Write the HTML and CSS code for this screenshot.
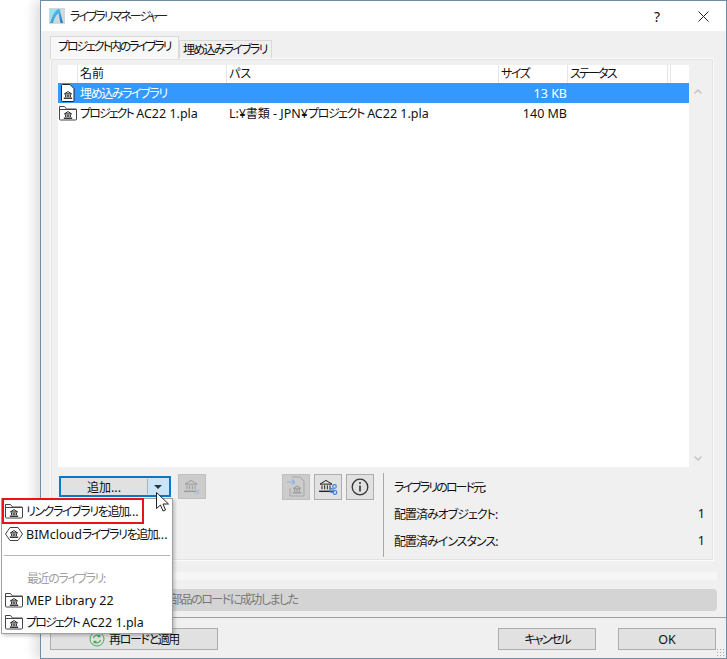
FILE: index.html
```html
<!DOCTYPE html>
<html lang="ja">
<head>
    <meta charset="UTF-8">
    <title>ライブラリマネージャー</title>
    <link rel="stylesheet" href="styles.css">
</head>
<body>
    <svg class="defs" width="0" height="0">
        <symbol id="bank" viewBox="0 0 12 10">
            <path d="M1.5 3.600 6 .8l4.500 2.800z" fill="none" stroke="currentColor" vector-effect="non-scaling-stroke"/>
            <path d="M3 4.500v3M5 4.500v3M7 4.500v3M9 4.500v3" stroke="currentColor" vector-effect="non-scaling-stroke"/>
            <path d="M.8 9h10.400" stroke="currentColor" stroke-width="1.400" vector-effect="non-scaling-stroke"/>
        </symbol>
        <symbol id="folder" viewBox="0 0 18 16">
            <path d="M.5 14V1.500h5l2 2.500h9.500a.5.5 0 0 1 .5.5V14a1 1 0 0 1-1 1H1.500a1 1 0 0 1-1-1z" fill="#fff" stroke="#444"/>
            <path d="M.5 4.500h17" stroke="#444"/>
            <use href="#bank" x="4" y="6" width="10" height="8" color="#222"/>
        </symbol>
    </svg>

    <div class="window">
        <div class="titlebar">
            <svg class="app-icon" viewBox="0 0 16 16">
                <defs>
                    <linearGradient id="logo" x1="0" y1="0" x2="1" y2="1">
                        <stop offset="0" stop-color="#5fe0f0"/>
                        <stop offset="1" stop-color="#1573c9"/>
                    </linearGradient>
                </defs>
                <rect x="0" y="0" width="16" height="16" fill="#cfd8dc"/>
                <path d="M1 15C3 9 5 3 9 1h1.500L14 15h-2.500L9.500 5C7 7 5 11 4 15z" fill="url(#logo)"/>
                <path d="M1 1h7C5 4 2 9 1 13z" fill="#8fe6f2"/>
            </svg>
            <span class="title">ライブラリマネージャー</span>
            <span class="help lat">?</span>
            <svg class="close" viewBox="0 0 11 11"><path d="M.5.500l10 10M10.500.500l-10 10" stroke="#222" fill="none"/></svg>
        </div>

        <div class="content">
            <div class="tabs">
                <div class="tab active">プロジェクト内のライブラリ</div>
                <div class="tab">埋め込みライブラリ</div>
            </div>

            <div class="panel">
                <div class="list-area">
                    <div class="list">
                        <div class="row head">
                            <div class="c-icon"></div>
                            <div class="c-name plain">名前</div>
                            <div class="c-path plain">パス</div>
                            <div class="c-size">サイズ</div>
                            <div class="c-status">ステータス</div>
                            <div class="c-end"></div>
                        </div>
                        <div class="row selected">
                            <div class="c-icon">
                                <svg class="row-icon" viewBox="0 0 18 18">
                                    <path d="M3.500.500h7.500l4 4v12a1 1 0 0 1-1 1h-10.500a1 1 0 0 1-1-1v-15a1 1 0 0 1 1-1z" fill="#fff" stroke="#222"/>
                                    <use href="#bank" x="4" y="7" width="10" height="8" color="#222"/>
                                </svg>
                            </div>
                            <div class="c-name">埋め込みライブラリ</div>
                            <div class="c-path"></div>
                            <div class="c-size lat">13 KB</div>
                            <div class="c-status"></div>
                        </div>
                        <div class="row">
                            <div class="c-icon"><svg class="row-icon"><use href="#folder"/></svg></div>
                            <div class="c-name"><span class="tight">プロジェクト</span><span class="lat"> AC22 1.pla</span></div>
                            <div class="c-path"><span class="lat">L:</span><span class="plain">¥書類</span><span class="lat"> - JPN¥</span>プロジェクト<span class="lat"> AC22 1.pla</span></div>
                            <div class="c-size lat">140 MB</div>
                            <div class="c-status"></div>
                        </div>
                    </div>
                    <div class="scrollbar">
                        <svg class="chevron" viewBox="0 0 8 5"><path d="M.5 4.500 4 1l3.500 3.500" fill="none" stroke="#c4c4c4" stroke-width="1.500"/></svg>
                        <svg class="chevron" viewBox="0 0 8 5"><path d="M.5.500 4 4 7.500.500" fill="none" stroke="#c4c4c4" stroke-width="1.500"/></svg>
                    </div>
                </div>

                <div class="lower">
                    <div class="tools">
                        <div class="split-button">
                            <div class="split-main plain">追加<span class="lat">...</span></div>
                            <div class="split-arrow"></div>
                        </div>
                        <button class="tool disabled remove-tool">
                            <svg viewBox="0 0 20 20" width="20" height="20">
                                <use href="#bank" x="1" y="2" width="16" height="14" color="#999"/>
                                <path d="M13 13l4 4M17 13l-4 4" stroke="#a9bfe0" stroke-width="1.200"/>
                            </svg>
                        </button>
                        <div class="tool-group">
                            <button class="tool disabled">
                                <svg viewBox="0 0 20 22" width="20" height="22">
                                    <path d="M6 1h8l4 4v15H4v-8" fill="none" stroke="#a5a5a5"/>
                                    <path d="M1 6h7M6 3.500 8.500 6 6 8.500" fill="none" stroke="#8fb4e6" stroke-width="1.200"/>
                                    <use href="#bank" x="6" y="9" width="10" height="9" color="#999"/>
                                </svg>
                            </button>
                            <button class="tool">
                                <svg viewBox="0 0 20 20" width="20" height="20">
                                    <use href="#bank" x="0" y="1" width="16" height="16" color="#222"/>
                                    <circle cx="16.500" cy="9.500" r="1.800" fill="none" stroke="#3f7fe0" stroke-width="1.200"/>
                                    <circle cx="13.500" cy="13.500" r="1.800" fill="none" stroke="#3f7fe0" stroke-width="1.200"/>
                                    <circle cx="17" cy="15.500" r="1.800" fill="none" stroke="#3f7fe0" stroke-width="1.200"/>
                                </svg>
                            </button>
                            <button class="tool">
                                <svg viewBox="0 0 18 18" width="18" height="18">
                                    <circle cx="9" cy="9" r="7.800" fill="none" stroke="#333" stroke-width="1.300"/>
                                    <path d="M9 7.500v6" stroke="#333" stroke-width="1.600"/>
                                    <circle cx="9" cy="5" r="1" fill="#333"/>
                                </svg>
                            </button>
                        </div>
                    </div>
                    <div class="stats">
                        <div class="stat"><span class="tight">ライブラリのロード元:</span></div>
                        <div class="stat"><span>配置済みオブジェクト:</span><span class="lat">1</span></div>
                        <div class="stat"><span>配置済みインスタンス:</span><span class="lat">1</span></div>
                    </div>
                </div>
            </div>

            <div class="progress"></div>
            <div class="status">ライブラリ部品のロードに成功しました</div>
        </div>

        <div class="footer">
            <button class="btn btn-reload">
                <svg viewBox="0 0 16 16" width="16" height="16">
                    <circle cx="8" cy="8" r="7" fill="none" stroke="#3fae5a"/>
                    <path d="M4.500 7a3.600 3.600 0 0 1 6.300-1.500M11.500 9a3.600 3.600 0 0 1-6.300 1.500M10.800 3.500v2.200H8.600M5.200 12.500v-2.200h2.200" fill="none" stroke="#3fae5a" stroke-width="1.200"/>
                </svg>
                再ロードと適用
            </button>
            <div class="footer-right">
                <button class="btn btn-small">キャンセル</button>
                <button class="btn btn-small lat">OK</button>
            </div>
            <div class="grip"></div>
        </div>
    </div>

    <div class="menu">
        <div class="menu-item hot"><svg class="row-icon"><use href="#folder"/></svg><span>リンクライブラリを追加<span class="lat">...</span></span></div>
        <div class="menu-item short">
            <svg class="row-icon" viewBox="0 0 18 18">
                <path d="M5 2.500h8l4.500 6.500-4.500 6.500H5L.5 9z" fill="#fff" stroke="#444"/>
                <use href="#bank" x="4" y="5" width="10" height="8" color="#222"/>
            </svg>
            <span><span class="lat">BIMcloud</span>ライブラリを追加<span class="lat">...</span></span>
        </div>
        <div class="menu-sep"></div>
        <div class="menu-item muted">最近のライブラリ:</div>
        <div class="menu-item"><svg class="row-icon"><use href="#folder"/></svg><span class="lat">MEP Library 22</span></div>
        <div class="menu-item"><svg class="row-icon"><use href="#folder"/></svg><span><span class="tight">プロジェクト</span><span class="lat"> AC22 1.pla</span></span></div>
    </div>

    <svg class="cursor" viewBox="0 0 13 20" width="13" height="20">
        <path d="M.5.500v16l4-3.500 2.500 6 2.500-1-2.500-6h5.500z" fill="#fff" stroke="#222"/>
    </svg>
</body>
</html>
```

FILE: styles.css
```css
* {
    box-sizing: border-box;
}
html, body {
    margin: 0;
    height: 100%;
    overflow: hidden;
}
body {
    background-color: #ffffff;
    font-family: "Noto Sans", "Noto Sans CJK JP", sans-serif;
    font-size: 12px;
    font-feature-settings: "palt";
    letter-spacing: -1.4px;
    color: #111;
}
.defs {
    position: absolute;
}
/* latin text runs a little larger than the kana */
.lat {
    font-size: 12.5px;
    letter-spacing: 0;
}
.plain {
    letter-spacing: 0;
}
.tight {
    letter-spacing: -1.9px;
}

/* window */
.window {
    position: absolute;
    left: 40px;
    top: 0;
    width: 687px;
    height: 659px;
    display: flex;
    flex-direction: column;
    background-color: #f0f0f0;
    border: 1px solid #6d8ea8;
    box-shadow: -6px 0 10px rgba(0, 0, 0, 0.12);
}
.titlebar {
    height: 30px;
    flex: none;
    display: flex;
    align-items: center;
    background-color: #ffffff;
    padding-left: 8px;
}
.app-icon {
    width: 16px;
    height: 16px;
}
.title {
    margin-left: 5px;
    letter-spacing: -2px;
    color: #222;
}
.help {
    margin-left: auto;
    font-size: 14px;
}
.close {
    width: 11px;
    height: 11px;
    margin-left: 38px;
    margin-right: 17px;
}

.content {
    flex: 1;
    display: flex;
    flex-direction: column;
    padding: 5px 9px 0 9px;
}

/* tabs */
.tabs {
    display: flex;
    align-items: flex-end;
    height: 22px;
    flex: none;
}
.tab {
    width: 93px;
    height: 18px;
    padding: 0 3px;
    line-height: 17px;
    white-space: nowrap;
    letter-spacing: -1.75px;
    background-color: #f0f0f0;
    border: 1px solid #d9d9d9;
    border-bottom: none;
}
.tab.active {
    width: 129px;
    height: 23px;
    margin-bottom: -1px;
    padding-left: 7px;
    line-height: 20px;
    letter-spacing: -2.1px;
    background-color: #f8f8f8;
    border-color: #d9d9d9;
    position: relative;
}
.panel {
    height: 503px;
    flex: none;
    margin-right: 3px;
    display: flex;
    flex-direction: column;
    padding: 6px 7px 0 7px;
    border: 1px solid #fbfbfb;
    outline: 1px solid #e4e4e4;
    outline-offset: -2px;
}

/* list */
.list-area {
    display: flex;
    height: 402px;
    flex: none;
}
.list {
    width: 631px;
    background-color: #ffffff;
}
.row {
    display: flex;
    height: 20px;
    align-items: center;
}
.row.head {
    height: 18px;
    background-color: #ffffff;
}
.row.head > div {
    height: 18px;
    line-height: 18px;
    border-right: 1px solid #e5e5e5;
    padding-left: 2px;
}
.row.selected {
    background-color: #3399ff;
    color: #ffffff;
}
.c-icon {
    width: 20px;
    flex: none;
    display: flex;
    justify-content: center;
}
.c-name {
    width: 149px;
    flex: none;
    padding-left: 2px;
}
.c-path {
    width: 272px;
    flex: none;
    padding-left: 2px;
}
.c-size {
    width: 69px;
    flex: none;
    padding-right: 1px;
    text-align: right;
}
.row.head .c-size {
    text-align: left;
}
.c-status {
    width: 100px;
    flex: none;
    letter-spacing: -1.8px;
}
.row-icon {
    width: 18px;
    height: 18px;
    flex: none;
}
.scrollbar {
    width: 17px;
    display: flex;
    flex-direction: column;
    justify-content: space-between;
    align-items: center;
    padding: 24px 0 6px;
}
.chevron {
    width: 8px;
    height: 5px;
}

/* lower part of the panel */
.lower {
    flex: 1;
    display: flex;
    padding-top: 6px;
    padding-bottom: 3px;
}
.tools {
    width: 326px;
    flex: none;
    display: flex;
    align-items: flex-start;
    padding-left: 1px;
    border-right: 1px solid #a8a8a8;
}
.split-button {
    width: 112px;
    height: 21px;
    margin-top: 3px;
    display: flex;
    border: 2px solid #0a78c8;
    background-color: #e1e1e1;
}
.split-main {
    flex: 1;
    text-align: center;
    line-height: 17px;
    border-right: 1px solid #b0b0b0;
    margin: 1px 0;
}
.split-arrow {
    width: 21px;
    background-color: #cce4f7;
    position: relative;
}
.split-arrow::after {
    content: "";
    position: absolute;
    left: 6px;
    top: 7px;
    border-left: 4px solid transparent;
    border-right: 4px solid transparent;
    border-top: 4px solid #333;
}
.tool {
    width: 28px;
    height: 26px;
    padding: 0;
    display: flex;
    align-items: center;
    justify-content: center;
    background-color: #e1e1e1;
    border: 1px solid #adadad;
    color: inherit;
}
.tool.disabled {
    background-color: #cccccc;
    border-color: #bfbfbf;
}
.remove-tool {
    height: 25px;
    margin-top: 1px;
    margin-left: 7px;
}
.tool-group {
    margin-top: 1px;
    margin-left: auto;
    margin-right: 9px;
    display: flex;
    gap: 4px;
}
.stats {
    flex: 1;
    padding: 0 1px 0 10px;
    display: flex;
    flex-direction: column;
    letter-spacing: -1px;
}
.stat {
    height: 27px;
    display: flex;
    align-items: center;
    justify-content: space-between;
}

/* status */
.progress {
    height: 8px;
    flex: none;
    margin-top: 11px;
    background-color: #f6f6f6;
}
.status {
    height: 22px;
    flex: none;
    margin-top: 9px;
    padding-left: 76px;
    line-height: 22px;
    background-color: #d4d4d4;
    border-radius: 4px;
    letter-spacing: -1.5px;
    color: #777;
}

/* footer */
.footer {
    height: 41px;
    flex: none;
    margin-top: 6px;
    border-top: 1px solid #a0a0a0;
    display: flex;
    align-items: flex-start;
    padding: 10px 10px 0 9px;
    position: relative;
}
.btn {
    height: 22px;
    padding: 0;
    background-color: #e1e1e1;
    border: 1px solid #adadad;
    font-family: inherit;
    font-size: 12px;
    font-feature-settings: inherit;
    letter-spacing: -1.8px;
    color: inherit;
    display: flex;
    align-items: center;
    justify-content: center;
    gap: 4px;
}
.btn.lat {
    font-size: 12.5px;
    letter-spacing: 0;
}
.btn-reload {
    width: 168px;
    letter-spacing: -1.4px;
}
.footer-right {
    margin-left: auto;
    display: flex;
    gap: 22px;
}
.btn-small {
    width: 98px;
}
.grip {
    position: absolute;
    right: 1px;
    bottom: 1px;
    width: 9px;
    height: 9px;
    background-image: radial-gradient(#a9a9a9 1px, transparent 1px);
    background-size: 3px 3px;
}

/* dropdown menu */
.menu {
    position: absolute;
    left: 1px;
    top: 498px;
    width: 172px;
    height: 136px;
    padding: 2px;
    background-color: #ffffff;
    border: 1px solid #a0a0a0;
    box-shadow: 2px 2px 3px rgba(0, 0, 0, 0.2);
}
.menu-item {
    height: 22px;
    display: flex;
    align-items: center;
    gap: 3px;
    padding-left: 1px;
    white-space: nowrap;
}
.menu-item.hot {
    height: 26px;
    margin: -3px 0 0 -2px;
    width: 142px;
    border: 2px solid #e8141c;
}
.menu-item.short {
    height: 20px;
}
.menu-sep {
    height: 1px;
    margin: 11px 0;
    background-color: #b5b5b5;
}
.menu-item.muted {
    padding-left: 23px;
    color: #a0a0a0;
}
.cursor {
    position: absolute;
    left: 156px;
    top: 492px;
}
```
